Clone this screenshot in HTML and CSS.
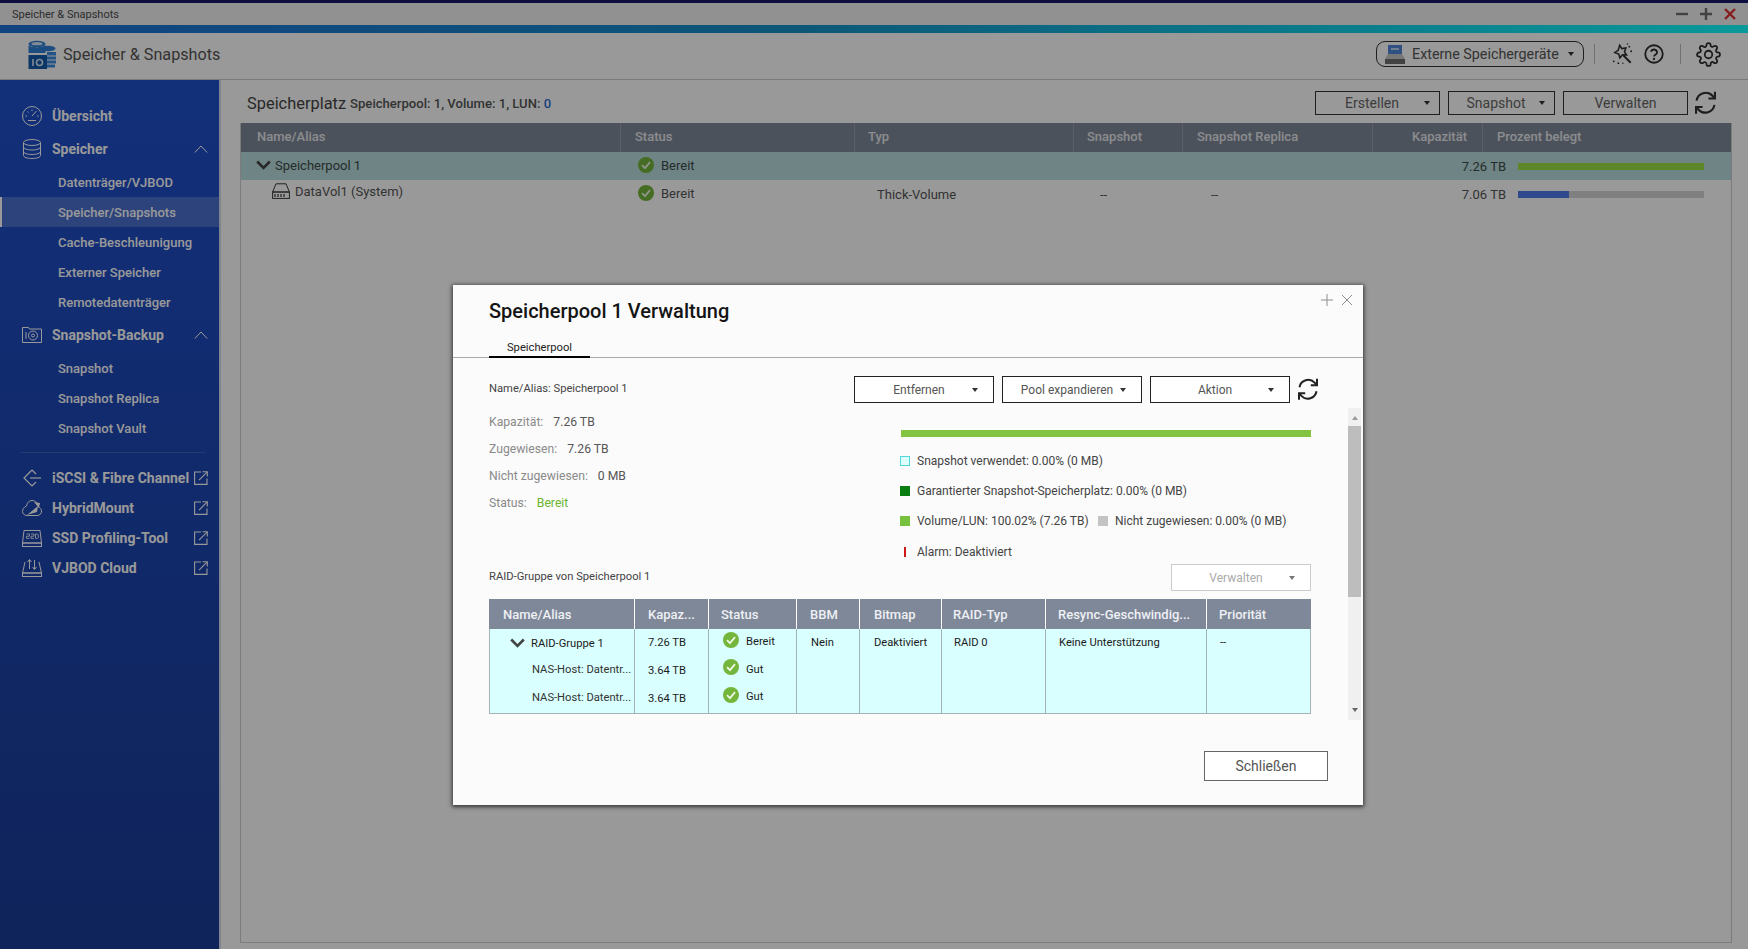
FILE: index.html
```html
<!DOCTYPE html>
<html lang="de">
<head>
<meta charset="utf-8">
<title>Speicher &amp; Snapshots</title>
<link rel="stylesheet" href="styles.css">
</head>
<body>
<svg class="defs" width="0" height="0">
  <defs>
    <symbol id="check" viewBox="0 0 16 16"><circle cx="8" cy="8" r="8" fill="#74b53b"/><path d="M4 8.200l3 3 5-6" fill="none" stroke="#eef8e4" stroke-width="1.800"/></symbol>
    <symbol id="chev" viewBox="0 0 15 10"><path d="M1.200 1.500L7.500 8l6.300-6.500" fill="none" stroke="currentColor" stroke-width="2.600"/></symbol>
    <symbol id="refresh" viewBox="2 1 20 22.500"><g fill="none" stroke="currentColor" stroke-width="2"><path d="M3.500 10A8.800 8.800 0 0 1 18.600 5.400L21 8"/><path d="M21 1.500V8h-6.200"/><path d="M20.500 14A8.800 8.800 0 0 1 5.400 18.600L3 16"/><path d="M3 22.500V16h6.200"/></g></symbol>
    <symbol id="ext" viewBox="0 0 14 14"><g fill="none" stroke="currentColor" stroke-width="1.100"><path d="M7 1H.6v12.400H13V7.500"/><path d="M5 9.200L13 1.200"/><path d="M8.500 .8h4.800v4.600"/></g></symbol>
    <symbol id="up" viewBox="0 0 14 8"><path d="M.8 7.500L7 1l6.200 6.500" fill="none" stroke="currentColor" stroke-width="1"/></symbol>
  </defs>
</svg>
<div class="app">
  <div class="strip"></div>
  <div class="titlebar">
    <span class="titlebar-text">Speicher &amp; Snapshots</span>
    <div class="winctl">
      <svg class="winbtn" viewBox="0 0 12 12"><path d="M0 6h12" stroke="#6e6e6e" stroke-width="2.400"/></svg>
      <svg class="winbtn" viewBox="0 0 12 12"><path d="M0 6h12M6 0v12" stroke="#6e6e6e" stroke-width="2.400"/></svg>
      <svg class="winbtn" viewBox="0 0 12 12"><path d="M1 1l10 10M11 1L1 11" stroke="#e0302f" stroke-width="2.400"/></svg>
    </div>
  </div>
  <div class="accent"></div>
  <header class="header">
    <svg class="logo" viewBox="0 0 29 29">
      <ellipse cx="10" cy="4" rx="8.500" ry="3.200" fill="#2f7fd6"/><ellipse cx="10" cy="3.700" rx="5.500" ry="1.600" fill="#d6e6f6"/>
      <path d="M1.500 5v8h17V5c-2 3-15 3-17 0z" fill="#2f7fd6"/>
      <ellipse cx="21" cy="8.500" rx="7.500" ry="2.800" fill="#2f7fd6"/>
      <rect x="20" y="12" width="9" height="3.500" fill="#3d8be0"/><rect x="20" y="16.500" width="9" height="3" fill="#3d8be0"/><rect x="20" y="20.500" width="9" height="3" fill="#3d8be0"/><rect x="20" y="24.500" width="8" height="3" fill="#3d8be0"/>
      <rect x="1.500" y="15" width="18.500" height="14" fill="#135aa8"/>
      <path d="M6 19v7" stroke="#d6e6f6" stroke-width="1.600"/><circle cx="12.500" cy="22.500" r="3" fill="none" stroke="#d6e6f6" stroke-width="1.600"/>
    </svg>
    <span class="app-name">Speicher &amp; Snapshots</span>
    <div class="header-tools">
      <div class="pill">
        <svg class="pill-icon" viewBox="0 0 20 20"><rect x="3" y="1" width="14" height="10" fill="#4f86d8"/><rect x="6" y="4" width="8" height="2" fill="#b9d2f2"/><path d="M3 10h14l3 5H0z" fill="#c6c6c6"/><rect y="15" width="20" height="5" fill="#6e6e6e"/></svg>
        <span>Externe Speichergeräte</span>
        <i class="pill-caret"></i>
      </div>
      <span class="vsep first"></span>
      <svg class="wand" viewBox="0 0 24 24"><g fill="none" stroke="#2e2e2e" stroke-width="1.700"><path d="M9.500 2.500l2.300 3.600 4.400-.6-1.500 4.200 2.200 3.400-4.300-.2-2.900 3.300-1.200-4.200-4.300-1.500 3.600-2.500z"/><path d="M13.500 13.500l8 8" stroke-width="2.200"/></g><g fill="#2e2e2e"><circle cx="20" cy="4" r="1"/><circle cx="22" cy="9" r="1"/><circle cx="18" cy="1" r=".8"/><circle cx="3" cy="20" r="1"/><circle cx="8" cy="22" r="1"/><circle cx="13" cy="22" r=".8"/></g></svg>
      <svg class="help" viewBox="0 0 24 24"><g fill="none" stroke="#2e2e2e" stroke-width="2.200"><circle cx="12" cy="12" r="10.500"/><path d="M8.300 9.200a3.800 3.800 0 0 1 7.400 1c0 2.500-3.700 2.800-3.700 4.700"/></g><circle cx="12" cy="18" r="1.400" fill="#2e2e2e"/></svg>
      <span class="vsep second"></span>
      <svg class="gear" viewBox="0 0 24 24"><g fill="none" stroke="#2e2e2e" stroke-width="1.700"><circle cx="12" cy="12" r="3.600"/><path d="M19.400 15a1.650 1.650 0 0 0 .33 1.820l.06.06a2 2 0 0 1 0 2.830 2 2 0 0 1-2.830 0l-.06-.06a1.650 1.650 0 0 0-1.820-.33 1.650 1.650 0 0 0-1 1.510V21a2 2 0 0 1-2 2 2 2 0 0 1-2-2v-.09A1.650 1.650 0 0 0 9 19.400a1.650 1.650 0 0 0-1.820.33l-.06.06a2 2 0 0 1-2.830 0 2 2 0 0 1 0-2.830l.06-.06a1.650 1.650 0 0 0 .33-1.820 1.650 1.650 0 0 0-1.510-1H3a2 2 0 0 1-2-2 2 2 0 0 1 2-2h.09A1.650 1.650 0 0 0 4.600 9a1.650 1.650 0 0 0-.33-1.820l-.06-.06a2 2 0 0 1 0-2.830 2 2 0 0 1 2.830 0l.06.06a1.650 1.650 0 0 0 1.820.33H9a1.650 1.650 0 0 0 1-1.510V3a2 2 0 0 1 2-2 2 2 0 0 1 2 2v.09a1.650 1.650 0 0 0 1 1.510 1.650 1.650 0 0 0 1.820-.33l.06-.06a2 2 0 0 1 2.830 0 2 2 0 0 1 0 2.830l-.06.06a1.650 1.650 0 0 0-.33 1.820V9a1.650 1.650 0 0 0 1.510 1H21a2 2 0 0 1 2 2 2 2 0 0 1-2 2h-.09a1.650 1.650 0 0 0-1.510 1z"/></g></svg>
    </div>
  </header>
  <div class="main">
    <nav class="sidebar">
      <div class="nav-main">
        <svg class="nav-icon" viewBox="0 0 20 20"><g fill="none" stroke="currentColor" stroke-width="1"><circle cx="10" cy="10" r="9.500"/><path d="M10 10l4.500-5"/><path d="M3.500 10h1.500M10 3.500V5M5.500 5.500l1 1M15 10h1.500M6 14.500h8"/></g></svg>
        <span class="nav-label">Übersicht</span>
      </div>
      <div class="nav-main">
        <svg class="nav-icon" viewBox="0 0 20 20"><g fill="none" stroke="currentColor" stroke-width="1"><ellipse cx="10" cy="3.500" rx="8.500" ry="3"/><path d="M1.500 3.500v13c0 1.700 3.800 3 8.500 3s8.500-1.300 8.500-3v-13"/><path d="M1.500 8c0 1.700 3.800 3 8.500 3s8.500-1.300 8.500-3M1.500 12.500c0 1.700 3.800 3 8.500 3s8.500-1.300 8.500-3"/></g></svg>
        <span class="nav-label">Speicher</span>
        <svg class="nav-end chevup"><use href="#up"/></svg>
      </div>
      <div class="nav-group">
        <a class="nav-sub">Datenträger/VJBOD</a>
        <a class="nav-sub active">Speicher/Snapshots</a>
        <a class="nav-sub">Cache-Beschleunigung</a>
        <a class="nav-sub">Externer Speicher</a>
        <a class="nav-sub">Remotedatenträger</a>
      </div>
      <div class="nav-main">
        <svg class="nav-icon" viewBox="0 0 20 20"><g fill="none" stroke="currentColor" stroke-width="1"><path d="M.5 17.500V2.500h6l1 1.500h12v13.500z"/><circle cx="11" cy="10.500" r="4.500"/><circle cx="11" cy="10.500" r="1.500"/><path d="M4 7v7"/></g></svg>
        <span class="nav-label">Snapshot-Backup</span>
        <svg class="nav-end chevup"><use href="#up"/></svg>
      </div>
      <div class="nav-group">
        <a class="nav-sub">Snapshot</a>
        <a class="nav-sub">Snapshot Replica</a>
        <a class="nav-sub">Snapshot Vault</a>
      </div>
      <div class="nav-sep"></div>
      <div class="nav-main tight">
        <svg class="nav-icon" viewBox="0 0 20 20"><g fill="none" stroke="currentColor" stroke-width="1.200"><path d="M10 2L2 10l8 8 4-4M14 6l-4-4"/><path d="M8 10h11"/></g></svg>
        <span class="nav-label">iSCSI &amp; Fibre Channel</span>
        <svg class="nav-end ext"><use href="#ext"/></svg>
      </div>
      <div class="nav-main tight">
        <svg class="nav-icon" viewBox="0 0 20 20"><path d="M5 17.500h10c3 0 4.500-2 4.500-4.500 0-2-1.500-3.500-3-4C16 5 13 2.500 10 2.500 7 2.500 5 5 4.500 8 2 9 .5 11 .5 13.500c0 2.200 2 4 4.500 4z" fill="none" stroke="currentColor"/><path d="M5 17l11-9-1 6zM12 4l6 1-1 5z" fill="currentColor"/></svg>
        <span class="nav-label">HybridMount</span>
        <svg class="nav-end ext"><use href="#ext"/></svg>
      </div>
      <div class="nav-main tight">
        <svg class="nav-icon" viewBox="0 0 20 20"><g fill="none" stroke="currentColor"><path d="M2 2.500h16l1.500 12.500H.5z"/><rect x=".5" y="15" width="19" height="3.500"/><path d="M4.500 6h3v2.200h-3v2.200h3M9 6h3v2.200H9v2.200h3M13.500 6h2l.8 1v2.400l-.8 1h-2z" stroke-width=".8"/></g></svg>
        <span class="nav-label">SSD Profiling-Tool</span>
        <svg class="nav-end ext"><use href="#ext"/></svg>
      </div>
      <div class="nav-main tight">
        <svg class="nav-icon" viewBox="0 0 20 20"><g fill="none" stroke="currentColor"><path d="M3 4L.5 15h19L17 4"/><rect x=".5" y="15" width="19" height="3.500"/><path d="M7.500 11V2M5.500 4l2-2.500L9.500 4M12.500 2v9M10.500 9l2 2.500 2-2.500"/></g></svg>
        <span class="nav-label">VJBOD Cloud</span>
        <svg class="nav-end ext"><use href="#ext"/></svg>
      </div>
    </nav>
    <section class="content">
      <div class="toolbar">
        <h1 class="page-title">Speicherplatz</h1>
        <span class="page-sub">Speicherpool: 1, Volume: 1, LUN: <b class="lun">0</b></span>
        <div class="toolbar-btns">
          <button class="btn btn-create">Erstellen<i class="caret"></i></button>
          <button class="btn btn-snap">Snapshot<i class="caret"></i></button>
          <button class="btn btn-manage">Verwalten</button>
          <svg class="refresh"><use href="#refresh"/></svg>
        </div>
      </div>
      <div class="panel">
        <div class="thead">
          <div class="th p16">Name/Alias</div>
          <div class="th p14">Status</div>
          <div class="th p13">Typ</div>
          <div class="th p13">Snapshot</div>
          <div class="th p14">Snapshot Replica</div>
          <div class="th right">Kapazität</div>
          <div class="th p14 last">Prozent belegt</div>
        </div>
        <div class="trow selected">
          <div class="td td-pool"><svg class="chev"><use href="#chev"/></svg>Speicherpool 1</div>
          <div class="td td-status"><svg class="ok"><use href="#check"/></svg>Bereit</div>
          <div class="td"></div>
          <div class="td"></div>
          <div class="td td-cap">7.26 TB</div>
          <div class="td td-bar"><div class="bar"><div class="bar-fill green" style="width:100%"></div></div></div>
        </div>
        <div class="trow">
          <div class="td td-vol">
            <svg class="vol" viewBox="0 0 18 16"><g fill="none" stroke="#3a3a3a"><path d="M4 .8h10l3.400 8.200H.6z"/><rect x=".6" y="9" width="16.800" height="6.400"/><path d="M3 11v3M6 11v3M9 11v3M12 11v3" stroke-width="1.200"/></g></svg>
            DataVol1 (System)
          </div>
          <div class="td td-status"><svg class="ok"><use href="#check"/></svg>Bereit</div>
          <div class="td td-type">Thick-Volume</div>
          <div class="td td-dash1">--</div>
          <div class="td td-cap td-dash2"><span>--</span><span>7.06 TB</span></div>
          <div class="td td-bar"><div class="bar"><div class="bar-fill blue" style="width:27.500%"></div></div></div>
        </div>
      </div>
    </section>
  </div>
</div>

<div class="overlay"></div>

<div class="dialog">
  <div class="dlg-ctl">
    <svg class="dlg-x" viewBox="0 0 12 12"><path d="M0 6h12M6 0v12" stroke="#8f8f8f"/></svg>
    <svg class="dlg-x" viewBox="0 0 12 12"><path d="M1 1l10 10M11 1L1 11" stroke="#8f8f8f"/></svg>
  </div>
  <h2 class="dlg-title">Speicherpool 1 Verwaltung</h2>
  <div class="tabs"><div class="tab">Speicherpool</div></div>
  <div class="dlg-bar">
    <span class="small-label">Name/Alias: Speicherpool 1</span>
    <div class="dlg-btns">
      <button class="btn btn-dlg">Entfernen<i class="caret"></i></button>
      <button class="btn btn-dlg">Pool expandieren<i class="caret"></i></button>
      <button class="btn btn-dlg">Aktion<i class="caret"></i></button>
      <svg class="refresh dark"><use href="#refresh"/></svg>
    </div>
  </div>
  <div class="scroller">
    <div class="scroll-body">
      <div class="overview">
        <div class="info">
          <div class="info-row"><span>Kapazität:</span><b>7.26 TB</b></div>
          <div class="info-row"><span>Zugewiesen:</span><b>7.26 TB</b></div>
          <div class="info-row"><span>Nicht zugewiesen:</span><b>0 MB</b></div>
          <div class="info-row"><span>Status:</span><b class="good">Bereit</b></div>
        </div>
        <div class="legend">
          <div class="legend-bar"></div>
          <div class="legend-row"><i class="sq cyan"></i>Snapshot verwendet: 0.00% (0 MB)</div>
          <div class="legend-row"><i class="sq dgreen"></i>Garantierter Snapshot-Speicherplatz: 0.00% (0 MB)</div>
          <div class="legend-row"><i class="sq lgreen"></i><span class="legend-fixed">Volume/LUN: 100.02% (7.26 TB)</span><i class="sq grey"></i>Nicht zugewiesen: 0.00% (0 MB)</div>
          <div class="legend-row alarm"><i class="sq red"></i>Alarm: Deaktiviert</div>
        </div>
      </div>
      <div class="raid-head">
        <span class="small-label raid-label">RAID-Gruppe von Speicherpool 1</span>
        <button class="btn btn-off">Verwalten<i class="caret"></i></button>
      </div>
      <div class="raid">
        <div class="raid-th">
          <div>Name/Alias</div><div>Kapaz...</div><div>Status</div><div>BBM</div><div>Bitmap</div><div>RAID-Typ</div><div>Resync-Geschwindig...</div><div>Priorität</div>
        </div>
        <div class="raid-tb">
          <div class="col col-name">
            <div class="n1"><svg class="chev"><use href="#chev"/></svg>RAID-Gruppe 1</div>
            <div class="n2">NAS-Host: Datentr...</div>
            <div class="n3">NAS-Host: Datentr...</div>
          </div>
          <div class="col col-cap"><div>7.26 TB</div><div>3.64 TB</div><div>3.64 TB</div></div>
          <div class="col col-st">
            <div><svg class="ok"><use href="#check"/></svg>Bereit</div>
            <div><svg class="ok"><use href="#check"/></svg>Gut</div>
            <div><svg class="ok"><use href="#check"/></svg>Gut</div>
          </div>
          <div class="col col-wide"><div>Nein</div></div>
          <div class="col col-wide"><div>Deaktiviert</div></div>
          <div class="col"><div>RAID 0</div></div>
          <div class="col col-plus"><div>Keine Unterstützung</div></div>
          <div class="col col-plus"><div>--</div></div>
        </div>
      </div>
    </div>
    <div class="scrollbar">
      <i class="sb-up"></i>
      <div class="sb-thumb"></div>
      <i class="sb-down"></i>
    </div>
  </div>
  <div class="dlg-foot"><button class="btn btn-close">Schließen</button></div>
</div>
</body>
</html>
```

FILE: styles.css
```css
* { box-sizing: border-box; }
html, body { margin: 0; padding: 0; }
body {
  width: 1748px;
  height: 949px;
  overflow: hidden;
  position: relative;
  font-family: Roboto, "Liberation Sans", sans-serif;
  color: #444;
  background: #fff;
}
.defs { position: absolute; }
.app { display: flex; flex-direction: column; height: 949px; }

.strip { height: 3px; background: #16166a; }
.titlebar { height: 22px; background: #f2f2f2; display: flex; align-items: center; justify-content: space-between; padding: 0 12px; }
.titlebar-text { font-size: 11px; color: #4c4c4c; }
.winctl { display: flex; gap: 12px; }
.winbtn { width: 12px; height: 12px; display: block; }
.accent { height: 8px; background: linear-gradient(90deg, #1e70d8 0%, #1590c8 45%, #10ffff 100%); }

.header { height: 47px; background: #fff; border-bottom: 1px solid #ccc; display: flex; align-items: center; padding: 0 27px 4px 27px; flex: none; }
.logo { width: 29px; height: 29px; flex: none; }
.app-name { font-size: 16.200px; margin-left: 7px; color: #555; }
.header-tools { margin-left: auto; display: flex; align-items: center; }
.pill { width: 208px; height: 26px; border: 1px solid #333; border-radius: 9px; display: flex; align-items: center; padding: 0 9px 0 8px; font-size: 14.300px; color: #555; background: #fff; }
.pill-icon { width: 20px; height: 20px; margin-right: 7px; flex: none; }
.pill-caret { margin-left: auto; width: 0; height: 0; border: 3.500px solid transparent; border-top: 4px solid #333; border-bottom: 0; }
.vsep { width: 1px; height: 20px; background: #bbb; flex: none; }
.vsep.first { margin: 0 16px 0 10px; }
.vsep.second { margin: 0 15px 0 16px; }
.wand { width: 22px; height: 22px; flex: none; }
.help { width: 20px; height: 20px; margin-left: 11px; flex: none; }
.gear { width: 25px; height: 25px; flex: none; }

.main { flex: 1; display: flex; min-height: 0; }

.sidebar {
  width: 221px;
  flex: none;
  padding-top: 21px;
  background: linear-gradient(180deg, #1f50cc 0%, #1a3c96 100%);
  border-right: 2px solid #d6dcec;
  color: #fff;
  display: flex;
  flex-direction: column;
  gap: 3px;
}
.nav-main { height: 30px; display: flex; align-items: center; padding: 0 11px 0 22px; font-size: 14px; font-weight: 700; }
.nav-main.tight { margin-top: -3px; }
.nav-sep + .nav-main.tight { margin-top: 0; }
.nav-icon { width: 20px; height: 20px; margin-right: 10px; flex: none; }
.nav-label { flex: 1; white-space: nowrap; }
.nav-end { flex: none; }
.chevup { width: 14px; height: 8px; }
.ext { width: 14px; height: 14px; }
.nav-group { display: flex; flex-direction: column; }
.nav-sub { height: 30px; line-height: 31px; padding-left: 58px; font-size: 13px; font-weight: 500; }
.nav-sub.active { background: rgba(255,255,255,.2); border-left: 2px solid #fff; padding-left: 56px; }
.nav-sep { height: 1px; margin: 6px 14px 7px 20px; background: rgba(255,255,255,.14); }

.content { flex: 1; min-width: 0; padding: 0 16px 6px 19px; display: flex; flex-direction: column; background: #fff; }
.toolbar { height: 43px; flex: none; display: flex; align-items: center; padding: 3px 0 0 7px; }
.page-title { margin: 0; font-size: 16.400px; font-weight: 400; color: #444; }
.page-sub { margin-left: 4px; font-size: 13.100px; font-weight: 500; color: #555; }
.lun { font-weight: 500; color: #2f6fd0; }
.toolbar-btns { margin-left: auto; display: flex; align-items: center; gap: 8px; padding-right: 16px; }

.btn { position: relative; height: 24px; background: #fff; border: 1px solid #333; font-family: inherit; font-size: 14px; color: #666; padding: 0; cursor: default; }
.btn-create { width: 125px; padding-right: 11px; }
.btn-snap { width: 107px; padding-right: 11px; }
.btn-manage { width: 125px; }
.caret { position: absolute; right: 9px; top: 50%; margin-top: -2px; width: 0; height: 0; border: 3.500px solid transparent; border-top: 4px solid #333; border-bottom: 0; }
.refresh { width: 21px; height: 24px; color: #333; margin-left: -1px; }
.refresh.dark { color: #222; width: 20px; height: 23px; margin-left: 0; }

.panel { flex: 1; border: 1px solid #cfcfcf; border-top: 0; }
.thead { height: 29px; background: #7f8998; display: grid; grid-template-columns: 380px 234px 219px 109px 190px 110px 1fr; }
.th { display: flex; align-items: center; padding-bottom: 2px; font-size: 13px; font-weight: 500; color: #e8eaee; border-right: 1px solid #98a0ad; white-space: nowrap; }
.th.p16 { padding-left: 16px; }
.th.p14 { padding-left: 14px; }
.th.p13 { padding-left: 13px; }
.th.right { justify-content: flex-end; padding-right: 15px; }
.th.last { border-right: 0; }
.trow { height: 28px; display: grid; grid-template-columns: 380px 234px 219px 109px 323px 1fr; font-size: 13px; color: #555; }
.trow.selected { background: #b9dcdc; color: #3c4a4a; }
.td { display: flex; align-items: center; white-space: nowrap; }
.td-pool { padding: 0 0 2px 15px; }
.chev { width: 15px; height: 10px; color: #444; margin-right: 4px; flex: none; }
.td-vol { padding: 0 0 6px 31px; }
.vol { width: 18px; height: 16px; margin-right: 5px; flex: none; }
.td-status { padding: 0 0 2px 17px; }
.ok { width: 16px; height: 16px; margin-right: 7px; flex: none; }
.td-type { padding-left: 22px; }
.td-dash1 { padding-left: 26px; }
.td-cap { justify-content: flex-end; }
.td-dash2 { justify-content: space-between; padding-left: 28px; }
.td-bar { padding-left: 12px; }
.bar { width: 186px; height: 7px; background: #d6d6d6; }
.bar-fill { height: 100%; }
.bar-fill.green { background: #9be244; }
.bar-fill.blue { background: #4f7aea; }

.overlay { position: absolute; inset: 0; background: rgba(0,0,0,.4); }

.dialog {
  position: absolute;
  left: 453px;
  top: 285px;
  width: 910px;
  height: 520px;
  background: #fbfbfb;
  box-shadow: 0 1px 4px 1px rgba(0,0,0,.65);
  display: flex;
  flex-direction: column;
}
.dlg-ctl { position: absolute; right: 10px; top: 9px; display: flex; gap: 8px; }
.dlg-x { width: 12px; height: 12px; }
.dlg-title { margin: 13px 0 0 36px; height: 26px; line-height: 26px; font-size: 20px; font-weight: 500; color: #141414; flex: none; }
.tabs { height: 34px; flex: none; border-bottom: 1px solid #aaa; padding: 14px 0 0 36px; }
.tab { width: 101px; height: 20px; line-height: 19px; text-align: center; font-size: 11.200px; color: #222; border-bottom: 2px solid #000; }

.dlg-bar { flex: none; height: 27px; margin-top: 18px; padding: 0 45px 0 36px; display: flex; align-items: center; justify-content: space-between; }
.small-label { font-size: 11.200px; color: #444; padding-bottom: 2px; }
.raid-label { padding-bottom: 3px; }
.dlg-btns { display: flex; align-items: center; gap: 8px; }
.btn-dlg { width: 140px; height: 27px; font-size: 12px; padding-right: 10px; color: #555; border-color: #222; }
.btn-dlg .caret { right: 15px; }

.scroller { flex: none; height: 312px; margin-top: 5px; display: flex; }
.scroll-body { width: 895px; padding: 0 37px 0 36px; }
.overview { height: 156px; display: flex; }
.info { width: 411px; flex: none; }
.info-row { height: 27px; display: flex; align-items: center; gap: 10px; font-size: 12.200px; color: #8a8a8a; }
.info-row b { font-weight: 400; color: #555; }
.info-row .good { color: #6bb52f; }
.legend { flex: 1; padding-top: 22px; font-size: 12px; color: #444; }
.legend-bar { height: 7px; margin: 0 0 9px 1px; background: #82c341; }
.legend-row { height: 30px; display: flex; align-items: center; white-space: nowrap; }
.legend-row.alarm { height: 24px; margin-top: 4px; }
.legend-fixed { width: 181px; }
.sq { width: 10px; height: 10px; margin-right: 7px; flex: none; }
.cyan { border: 1px solid #55d8d8; background: #dcffff; }
.dgreen { background: #0a7d10; }
.lgreen { background: #78c13e; }
.grey { background: #c4c4c4; }
.red { background: linear-gradient(90deg, transparent 4px, #d01a1a 4px, #d01a1a 6px, transparent 6px); }

.raid-head { height: 27px; margin-bottom: 8px; display: flex; align-items: center; justify-content: space-between; }
.btn-off { width: 140px; height: 27px; font-size: 12px; color: #aaa; border-color: #ccc; padding-right: 10px; }
.btn-off .caret { right: 15px; border-top-color: #777; }

.raid { width: 822px; }
.raid-th { height: 30px; background: #7f8899; display: grid; grid-template-columns: 146px 74px 88px 63px 82px 104px 161px 1fr; }
.raid-th div { display: flex; align-items: center; padding-left: 12px; font-size: 13px; font-weight: 500; color: #eef0f4; border-right: 1px solid #fff; white-space: nowrap; }
.raid-th div:first-child { padding-left: 14px; }
.raid-th div:nth-child(2) { padding-left: 13px; }
.raid-th div:nth-child(4) { padding-left: 13px; }
.raid-th div:nth-child(5) { padding-left: 14px; }
.raid-th div:nth-child(6) { padding-left: 11px; }
.raid-th div:last-child { border-right: 0; }
.raid-tb { height: 85px; display: grid; grid-template-columns: 145px 74px 88px 63px 82px 104px 161px 1fr; background: #d9ffff; border: 1px solid #a3b3b8; border-top: 0; font-size: 11.200px; color: #1c1c1c; }
.col { border-right: 1px solid #a3b3b8; padding-left: 12px; }
.col:last-child { border-right: 0; }
.col > div { height: 28px; display: flex; align-items: center; white-space: nowrap; }
.col > div:first-child { margin-top: -1px; }
.col-wide { padding-left: 14px; }
.col-plus { padding-left: 13px; }
.col-name { padding-left: 0; }
.col-name .chev { width: 15px; height: 10px; margin: 0 6px 0 20px; }
.col-name .n1 { height: 30px; }
.col-name .n2 { height: 22px; padding-left: 42px; color: #333; }
.col-name .n3 { height: 34px; padding-left: 42px; color: #333; }
.col-cap { padding-left: 13px; }
.col-st { padding-left: 14px; }
.col-st > div { height: 27.500px; }
.col-st .ok { margin: 0 7px 4px 0; }

.scrollbar { width: 13px; margin-right: 2px; background: #f0f0f0; display: flex; flex-direction: column; align-items: center; }
.sb-up, .sb-down { width: 0; height: 0; border: 3.500px solid transparent; flex: none; }
.sb-up { border-bottom: 4px solid #999; border-top: 0; margin-top: 8px; }
.sb-down { border-top: 4px solid #666; border-bottom: 0; margin-top: auto; margin-bottom: 8px; }
.sb-thumb { width: 100%; height: 171px; margin-top: 6px; background: #bdbdbd; flex: none; }

.dlg-foot { flex: 1; display: flex; justify-content: flex-end; padding: 31px 35px 0 0; }
.btn-close { width: 124px; height: 30px; font-size: 14px; color: #555; border-color: #666; }
```
